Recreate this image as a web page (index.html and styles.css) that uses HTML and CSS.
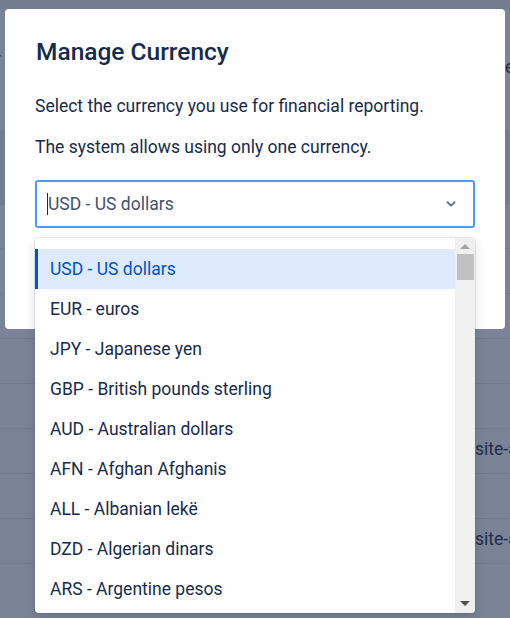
FILE: index.html
```html
<!DOCTYPE html>
<html>
<head>
    <title>Manage Currency</title>
    <link rel="stylesheet" href="styles.css">
</head>
<body>
    <div class="page">
        <div class="page-top"></div>
        <div class="page-head">
            <span class="edge-left">r</span>
            <span class="edge-right">e</span>
        </div>
        <div class="page-band"></div>
        <div class="rows">
            <div class="row"></div>
            <div class="row"></div>
            <div class="row"></div>
            <div class="row"></div>
            <div class="row"><span class="edge-right">site-a</span></div>
            <div class="row"></div>
            <div class="row"><span class="edge-right">site-a</span></div>
            <div class="row"></div>
        </div>
    </div>

    <div class="modal">
        <h1>Manage Currency</h1>
        <p>Select the currency you use for financial reporting.</p>
        <p>The system allows using only one currency.</p>
        <div class="select">
            <span class="caret"></span>
            <span class="value">USD - US dollars</span>
            <svg class="chevron" width="12" height="12" viewBox="0 0 12 12">
                <path d="M2.5 4.2 L6 7.6 L9.5 4.2" fill="none" stroke="#6b778c" stroke-width="2" stroke-linecap="round" stroke-linejoin="round"/>
            </svg>
        </div>
    </div>

    <div class="menu">
        <ul class="options">
            <li class="selected">USD - US dollars</li>
            <li>EUR - euros</li>
            <li>JPY - Japanese yen</li>
            <li>GBP - British pounds sterling</li>
            <li>AUD - Australian dollars</li>
            <li>AFN - Afghan Afghanis</li>
            <li>ALL - Albanian lekë</li>
            <li>DZD - Algerian dinars</li>
            <li>ARS - Argentine pesos</li>
        </ul>
        <div class="scrollbar">
            <span class="arrow-up"></span>
            <span class="thumb"></span>
            <span class="track"></span>
            <span class="arrow-down"></span>
        </div>
    </div>
</body>
</html>
```

FILE: styles.css
```css
body {
    margin: 0;
    font-family: Roboto, "Liberation Sans", sans-serif;
    background-color: #7a8397;
    overflow: hidden;
}

.page {
    height: 618px;
    overflow: hidden;
    color: #1d2a45;
}

.page-top {
    height: 9px;
    background-color: #737c90;
}

.page-head {
    height: 121px;
    position: relative;
}

.page-band {
    height: 75px;
    background-color: #737c90;
}

.rows {
    margin-top: 43px;
}

.row {
    height: 44px;
    border-top: 1px solid #70798d;
    position: relative;
}

.edge-left,
.edge-right {
    position: absolute;
    font-size: 17.5px;
    color: #1f2c48;
    white-space: nowrap;
}

.page-head .edge-left {
    left: -5px;
    top: 40px;
}

.page-head .edge-right {
    left: 505px;
    top: 48px;
}

.row .edge-right {
    left: 475px;
    top: 10px;
}

.modal {
    position: absolute;
    left: 5px;
    top: 9px;
    width: 500px;
    height: 320px;
    box-sizing: border-box;
    background-color: #fff;
    border-radius: 4px;
    padding: 28px 30px;
    color: #172b4d;
}

h1 {
    margin: 0 0 27px 1px;
    font-size: 24.5px;
    font-weight: 500;
    line-height: 30px;
}

p {
    margin: 0 0 17px 0;
    font-size: 17.5px;
    line-height: 24px;
}

.select {
    display: flex;
    align-items: center;
    height: 48px;
    margin-top: 21px;
    box-sizing: border-box;
    border: 2px solid #4c9aff;
    border-radius: 3px;
    padding: 0 16px 0 10px;
    color: #42526e;
    font-size: 17.5px;
}

.caret {
    width: 1px;
    height: 22px;
    background-color: #172b4d;
}

.value {
    flex: 1;
}

.menu {
    position: absolute;
    left: 35px;
    top: 238px;
    width: 440px;
    height: 375px;
    background-color: #fff;
    border-radius: 4px;
    box-shadow: 0 0 0 1px rgba(9, 30, 66, 0.08), 0 4px 11px rgba(9, 30, 66, 0.15);
    display: flex;
    overflow: hidden;
}

.options {
    list-style: none;
    margin: 0;
    padding: 11px 0 0 0;
    flex: 1;
}

.options li {
    height: 40px;
    line-height: 40px;
    padding-left: 15px;
    font-size: 17.5px;
    color: #172b4d;
    white-space: nowrap;
}

.options li.selected {
    background-color: #deebff;
    color: #0052cc;
    border-left: 3px solid #0052cc;
    padding-left: 12px;
}

.scrollbar {
    width: 20px;
    background-color: #f0f0f0;
    display: flex;
    flex-direction: column;
    align-items: center;
}

.arrow-up {
    margin-top: 6px;
    border-left: 5px solid transparent;
    border-right: 5px solid transparent;
    border-bottom: 5px solid #a3a3a3;
}

.thumb {
    width: 17px;
    height: 26px;
    margin-top: 5px;
    background-color: #c1c1c1;
}

.track {
    flex: 1;
}

.arrow-down {
    margin-bottom: 7px;
    border-left: 5px solid transparent;
    border-right: 5px solid transparent;
    border-top: 5px solid #505050;
}
```
